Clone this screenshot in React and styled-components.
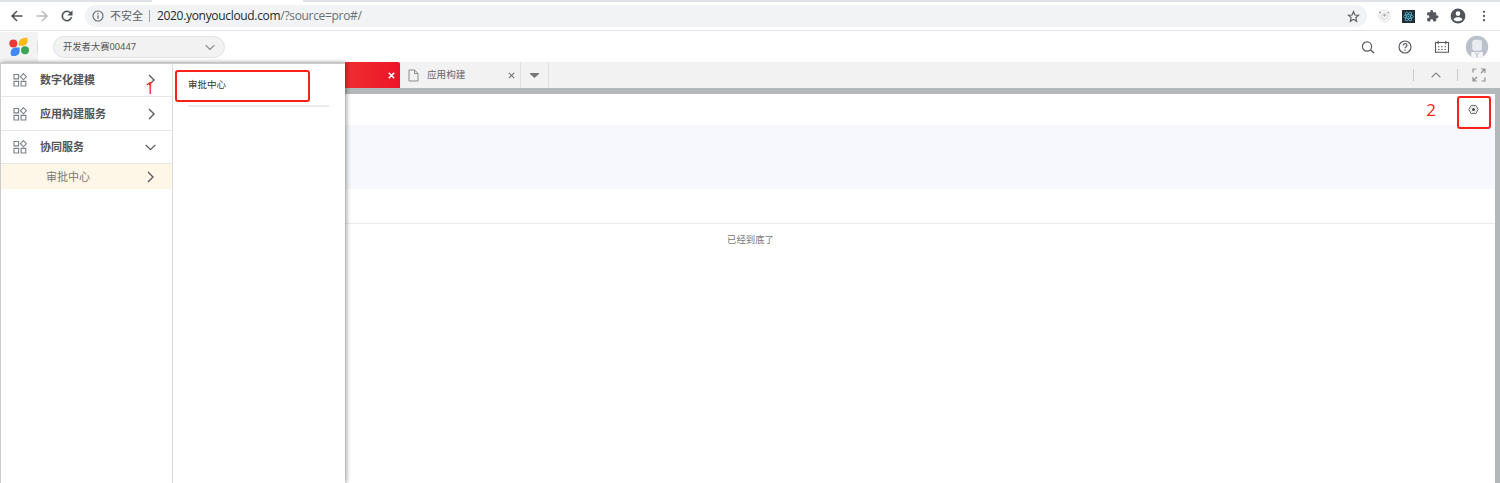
import React from 'react';
import styled, { createGlobalStyle } from 'styled-components';

const GlobalStyle = createGlobalStyle`
  * { box-sizing: border-box; }
  body {
    margin: 0;
    background: #fff;
    overflow: hidden;
    font-family: "Noto Sans", "Noto Sans CJK SC", sans-serif;
    color: #333;
  }
  svg { display: block; flex: none; }
`;

const Page = styled.div`
  position: relative;
  display: flex;
  flex-direction: column;
  height: 483px;
  overflow: hidden;
`;

/* Browser chrome */
const TabStrip = styled.div`
  height: 2px;
  flex: none;
  background: #dee1e6;
  padding-left: 152px;
`;
const ActiveBrowserTab = styled.div`
  width: 151px;
  height: 2px;
  background: #fff;
`;
const Toolbar = styled.div`
  height: 29px;
  flex: none;
  display: flex;
  align-items: center;
  padding: 0 9px 0 9px;
  border-bottom: 1px solid #e1e3e6;
`;
const NavButtons = styled.div`
  display: flex;
  gap: 9px;
  width: 76px;
`;
const AddressBar = styled.div`
  flex: 1;
  height: 22px;
  border-radius: 11px;
  background: #f1f3f4;
  display: flex;
  align-items: center;
  padding: 0 7px 0 7px;
  font-size: 12px;
  line-height: 22px;
  color: #5f6368;
`;
const Warning = styled.span`
  margin-left: 6px;
  width: 33px;
  font-size: 11px;
  white-space: nowrap;
`;
const AddressDivider = styled.span`
  width: 1px;
  height: 12px;
  margin: 0 7px 0 6px;
  background: #9fa3a7;
`;
const Url = styled.span`
  flex: 1;
  color: #6b6f73;
  font-family: "Open Sans", sans-serif;
  font-size: 12px;
  letter-spacing: -0.32px;
  b { font-weight: 400; color: #27292c; }
`;
const Extensions = styled.div`
  display: flex;
  align-items: center;
  gap: 11px;
  margin-left: 11px;
`;

/* Application header */
const Header = styled.header`
  height: 31px;
  flex: none;
  display: flex;
  align-items: center;
  padding: 1px 11px 0 0;
`;
const LogoCell = styled.div`
  width: 38px;
  height: 31px;
  padding: 5px 0 0 8px;
  background: linear-gradient(#ddd, #ddd) right center / 1px 12px no-repeat, #f3f3f3;
`;
const TenantSelect = styled.div`
  width: 172px;
  height: 22px;
  margin-left: 15px;
  padding: 0 9px;
  border: 1px solid #e3e3e3;
  border-radius: 11px;
  background: #f2f2f2;
  display: flex;
  align-items: center;
  justify-content: space-between;
  font-size: 9.3px;
  line-height: 20px;
  color: #555;
`;
const HeaderActions = styled.div`
  margin-left: auto;
  display: flex;
  align-items: center;
`;
const ActionSlot = styled.div`
  width: 37px;
  display: flex;
  justify-content: center;
`;
const AvatarSlot = styled.div`
  margin-left: 5px;
`;

/* Open page tabs */
const TabBar = styled.nav`
  height: 26px;
  flex: none;
  display: flex;
  background: #f2f2f2;
`;
const RedTab = styled.div`
  width: 55px;
  margin-left: 345px;
  display: flex;
  align-items: center;
  justify-content: flex-end;
  padding: 1px 5px 0 0;
  border-radius: 0 2px 0 0;
  background: linear-gradient(90deg, #ef2f30, #ec1428);
`;
const PageTab = styled.div`
  width: 121px;
  display: flex;
  align-items: center;
  padding: 0 5px 0 8px;
  border-right: 1px solid #e0e0e0;
  font-size: 9.6px;
  color: #666;
`;
const TabLabel = styled.span`
  flex: 1;
  margin-left: 8px;
  line-height: 24px;
`;
const TabMenu = styled.div`
  width: 28px;
  display: flex;
  align-items: center;
  justify-content: center;
  border-right: 1px solid #e0e0e0;
`;
const TabTools = styled.div`
  margin-left: auto;
  display: flex;
  align-items: center;
`;
const ToolCell = styled.div`
  width: ${(p) => p.$width}px;
  height: 12px;
  border-left: 1px solid #c9c9c9;
  display: flex;
  align-items: center;
  justify-content: center;
`;

/* Page content */
const Frame = styled.main`
  flex: 1;
  border: solid #b3b8bb;
  border-width: 6px 5px 0 0;
  background: #fff;
`;
const ContentTop = styled.div`
  height: 31px;
  display: flex;
  align-items: flex-start;
  justify-content: flex-end;
  padding: 2px 4px 0 0;
`;
const StepNumber = styled.span`
  font-family: "Open Sans", sans-serif;
  font-size: 17px;
  line-height: 27px;
  color: #fb2418;
`;
const GearMark = styled.div`
  width: 34px;
  height: 33px;
  margin-left: 21px;
  border: 2px solid #fa2117;
  border-radius: 3px;
  display: flex;
  justify-content: center;
  padding: 6px 1px 0 0;
  position: relative;
  z-index: 1;
`;
const Band = styled.div`
  height: 64px;
  background: #f7f8fd;
`;
const FilterRow = styled.div`
  height: 35px;
  border-bottom: 1px solid #ebebeb;
`;
const EndText = styled.p`
  margin: 0;
  padding-top: 7px;
  padding-left: 6px;
  text-align: center;
  font-size: 9.4px;
  line-height: 18px;
  color: #777;
`;

/* Menu that drops over the page */
const MenuPanel = styled.aside`
  position: absolute;
  top: 63px;
  left: 0;
  z-index: 2;
  width: 345px;
  height: 420px;
  display: flex;
  background: #fff;
  border: solid #ccc;
  border-width: 1px 0 0 1px;
  box-shadow: 1px 0 5px rgba(0, 0, 0, 0.45);
`;
const MenuColumn = styled.div`
  width: 172px;
  border-right: 1px solid #ddd;
`;
const MenuRow = styled.div`
  height: ${(p) => p.$height}px;
  display: flex;
  align-items: center;
  padding: 0 ${(p) => (p.$open ? 16 : 17)}px 0 12px;
  border-bottom: 1px solid #e6e6e6;
  font-size: 11px;
  font-weight: 600;
  color: #555;
`;
const MenuLabel = styled.span`
  flex: 1;
  margin-left: 13px;
  line-height: 30px;
`;
const SubRow = styled.div`
  height: 25px;
  display: flex;
  align-items: center;
  justify-content: space-between;
  padding: 0 18px 0 45px;
  background: #fef6e6;
  font-size: 11px;
  line-height: 25px;
  color: #777;
`;
const SubColumn = styled.div`
  flex: 1;
  padding: 6px 0 0 2px;
`;
const Highlighted = styled.div`
  width: 135px;
  height: 32px;
  border: 2px solid #fa2117;
  border-radius: 3px;
  padding-left: 11px;
  font-size: 9.5px;
  line-height: 26px;
  color: #333;
`;
const Rule = styled.div`
  width: 141px;
  height: 2px;
  margin: 3px 0 0 13px;
  background: #ececec;
`;
const StepOverlay = styled(StepNumber)`
  position: absolute;
  top: 10px;
  left: 144px;
`;

const Line = ({ w = 14, h = w, box = '0 0 24 24', color = '#555', sw = 2, children }) => (
  <svg width={w} height={h} viewBox={box} fill="none" stroke={color} strokeWidth={sw}>
    {children}
  </svg>
);

const ChevronRight = () => (
  <Line w={7} h={12} box="0 0 7 12" color="#5a5a5a" sw={1.4}><path d="M1 1l5 5-5 5" /></Line>
);
const ChevronDown = ({ color = '#5a5a5a', w = 11 }) => (
  <Line w={w} h={7} box="0 0 11 7" color={color} sw={1.3}><path d="M.7.9l4.8 4.8L10.3.9" /></Line>
);
const Cross = ({ color, sw = 1.2 }) => (
  <Line w={7} box="0 0 7 7" color={color} sw={sw}><path d="M.8.8l5.4 5.4M6.2.8L.8 6.2" /></Line>
);
const ModuleIcon = () => (
  <Line w={14} box="0 0 14 14" color="#7c808b" sw={1.1}>
    <path d="M1 1.5h4.6v4.4H1zM1 8.4h4.6V13H1zM8.1 8.4h4.7V13H8.1zM10.4.6l3 3.1-3 3.1-3-3.1z" />
  </Line>
);

const BackArrow = ({ color }) => (
  <Line w={16} box="0 0 16 16" color={color} sw={1.5}><path d="M13.5 8H3M8 3L3 8l5 5" /></Line>
);
const ForwardArrow = ({ color }) => (
  <Line w={16} box="0 0 16 16" color={color} sw={1.5}><path d="M2.5 8H13M8 3l5 5-5 5" /></Line>
);
const Reload = () => (
  <svg width="16" height="16" viewBox="0 0 24 24" fill="#4e5257" stroke="#4e5257" strokeWidth=".5">
    <path d="M17.65 6.35A7.96 7.96 0 0 0 12 4a8 8 0 1 0 7.73 10h-2.08A6 6 0 1 1 12 6c1.66 0 3.14.69 4.22 1.78L13 11h7V4z" />
  </svg>
);
const Info = () => (
  <Line w={12} box="0 0 12 12" color="#5f6368" sw={1.1}>
    <circle cx="6" cy="6" r="5" /><path d="M6 5.3v3.5M6 3.1v1.2" strokeWidth="1.2" />
  </Line>
);
const Star = () => (
  <Line w={13} box="0 0 24 24" color="#55595e" sw={2}>
    <path d="M12 2.8l2.7 6.3 6.8.6-5.2 4.5 1.6 6.7-5.9-3.6-5.9 3.6 1.6-6.7-5.2-4.5 6.8-.6z" />
  </Line>
);
const Orbit = () => (
  <svg width="13" height="14" viewBox="0 0 13 14" fill="#999">
    <circle cx="6.5" cy="7" r="5.8" fill="#f7f7f7" stroke="#ddd" strokeWidth=".8" />
    <circle cx="6.5" cy="7.3" r="3" fill="none" stroke="#c4c4c4" strokeWidth=".7" />
    <circle cx="2" cy="3.4" r=".9" /><circle cx="6.5" cy="6.4" r="1.1" /><circle cx="10.3" cy="3.6" r=".8" />
  </svg>
);
const ReactBadge = () => (
  <svg width="13" height="13" viewBox="0 0 13 13" fill="none" stroke="#54bcd8" strokeWidth=".75">
    <path d="M0 0h13v13H0z" fill="#222c35" stroke="none" />
    <ellipse cx="6.5" cy="6.5" rx="5" ry="1.9" />
    <ellipse cx="6.5" cy="6.5" rx="5" ry="1.9" transform="rotate(60 6.5 6.5)" />
    <ellipse cx="6.5" cy="6.5" rx="5" ry="1.9" transform="rotate(120 6.5 6.5)" />
    <circle cx="6.5" cy="6.5" r=".8" fill="#54bcd8" stroke="none" />
  </svg>
);
const Puzzle = () => (
  <svg width="13" height="14" viewBox="0 0 24 24" fill="#55595e">
    <path d="M20.5 11H19V7a2 2 0 0 0-2-2h-4V3.5a2.5 2.5 0 0 0-5 0V5H4a2 2 0 0 0-2 2v3.8h1.5a2.7 2.7 0 0 1 0 5.4H2V20a2 2 0 0 0 2 2h3.8v-1.5a2.7 2.7 0 0 1 5.4 0V22H17a2 2 0 0 0 2-2v-4h1.5a2.5 2.5 0 0 0 0-5z" />
  </svg>
);
const Profile = () => (
  <svg width="16" height="16" viewBox="0 0 16 16">
    <circle cx="8" cy="8" r="7.4" fill="#50545a" />
    <circle cx="8" cy="5.6" r="2.3" fill="#fff" />
    <path d="M3.5 11.2C4.5 9.7 6.2 9.2 8 9.2s3.5.5 4.5 2C11.5 12.5 9.9 13.3 8 13.3s-3.5-.8-4.5-2.1z" fill="#fff" />
  </svg>
);
const Dots = () => (
  <svg width="14" height="14" viewBox="0 0 14 14" fill="#55595e">
    <circle cx="7" cy="2.8" r="1.15" /><circle cx="7" cy="7" r="1.15" /><circle cx="7" cy="11.2" r="1.15" />
  </svg>
);
const Logo = () => (
  <svg width="22" height="20" viewBox="0 0 22 20">
    <circle cx="5.3" cy="6.6" r="4" fill="#ea3a38" />
    <path d="M10.8 8.7V6.2C10.8 2.5 14 .9 19.2.6c1.3 4.6-.5 8.1-4.2 8.1z" fill="#fcb913" />
    <path d="M11.6 10.4v4c0 3.6-3.8 5.1-7.9 4.6-2.2-3-1-8 3.2-8.6z" fill="#4089f6" />
    <circle cx="17" cy="13.2" r="4" fill="#3aa655" />
  </svg>
);
const Search = () => (
  <Line w={14} box="0 0 14 14" color="#5b5b5b" sw={1.2}>
    <circle cx="6" cy="6.5" r="4.6" /><path d="M9.3 9.8l3.7 3.2" strokeWidth="1.5" />
  </Line>
);
const Help = () => (
  <Line w={14} box="0 0 14 14" color="#55565c" sw={1.15}>
    <circle cx="7" cy="7" r="6" />
    <path d="M5.1 5.5c0-2.6 3.9-2.4 3.9-.1 0 1.3-2 1.4-2 2.9M7 9.4v1.3" />
  </Line>
);
const Calendar = () => (
  <Line w={16} h={14} box="0 0 16 14" color="#5b5555" sw={1.1}>
    <path d="M1.5 2.5h13v9.8h-13zM4.2.7v3.5M11.8.7v3.5" />
    <path d="M4 6.7h8.4M4 9.5h8.4" strokeDasharray="1.4 1.9" />
  </Line>
);
const Avatar = () => (
  <svg width="24" height="24" viewBox="0 0 24 24">
    <circle cx="12" cy="12" r="11.2" fill="#bac1cb" />
    <rect x="7.3" y="4.8" width="9.6" height="11" rx="2.5" fill="#e9edf1" />
    <path d="M6.3 17h11.6v4.6c-3.5 2-8.2 2-11.6 0z" fill="#f4f6f8" />
    <path d="M10 17.7l2 2 2-2M12 19.7v2.5" stroke="#a5adb9" fill="none" />
  </svg>
);
const FileIcon = () => (
  <Line w={11} h={13} box="0 0 11 13" color="#8c8c8c" sw={1}>
    <path d="M1 1h5.6L10 4.4V12H1zM6.5 1v3.5H10" />
  </Line>
);
const Expand = () => (
  <Line w={14} box="0 0 14 14" color="#8f8f8f" sw={1.2}>
    <path d="M1 4.5V1h3.5M9 1h4v4M13 1L9 5M1 9v4h4M1 13l4-4M13 9.5V13H9.5" />
  </Line>
);
const Gear = () => (
  <Line w={11} h={11} box="0 0 11 11" color="#666" sw={1}>
    <path d="M3.2 1.4h4.6l2.4 4.1-2.4 4.1H3.200L.8 5.500z" strokeLinejoin="round" />
    <circle cx="5.5" cy="5.5" r="1.5" fill="#444" stroke="none" />
    <circle cx="5.500" cy="5.500" r="2.900" stroke="#aaa" strokeWidth=".5" />
  </Line>
);

const modules = [
  { name: '数字化建模', height: 33 },
  { name: '应用构建服务', height: 34 },
  { name: '协同服务', height: 33, open: true },
];

export default function App() {
  return (
    <Page>
      <GlobalStyle />
      <TabStrip><ActiveBrowserTab /></TabStrip>
      <Toolbar>
        <NavButtons>
          <BackArrow color="#4e5257" />
          <ForwardArrow color="#babcbe" />
          <Reload />
        </NavButtons>
        <AddressBar>
          <Info />
          <Warning>不安全</Warning>
          <AddressDivider />
          <Url><b>2020.yonyoucloud.com</b>/?source=pro#/</Url>
          <Star />
        </AddressBar>
        <Extensions>
          <Orbit /><ReactBadge /><Puzzle /><Profile /><Dots />
        </Extensions>
      </Toolbar>
      <Header>
        <LogoCell><Logo /></LogoCell>
        <TenantSelect>开发者大赛00447<ChevronDown color="#888" w={10} /></TenantSelect>
        <HeaderActions>
          <ActionSlot><Search /></ActionSlot>
          <ActionSlot><Help /></ActionSlot>
          <ActionSlot><Calendar /></ActionSlot>
          <AvatarSlot><Avatar /></AvatarSlot>
        </HeaderActions>
      </Header>
      <TabBar>
        <RedTab><Cross color="#fff" sw={1.6} /></RedTab>
        <PageTab>
          <FileIcon />
          <TabLabel>应用构建</TabLabel>
          <Cross color="#777" />
        </PageTab>
        <TabMenu>
          <svg width="9" height="5" viewBox="0 0 9 5"><path d="M0 0h9v1L4.5 5 0 1z" fill="#777" /></svg>
        </TabMenu>
        <TabTools>
          <ToolCell $width={44}>
            <Line w={10} h={6} box="0 0 10 6" color="#888" sw={1.2}><path d="M.6 5.3L5 1l4.4 4.3" /></Line>
          </ToolCell>
          <ToolCell $width={43}><Expand /></ToolCell>
        </TabTools>
      </TabBar>
      <Frame>
        <ContentTop>
          <StepNumber>2</StepNumber>
          <GearMark><Gear /></GearMark>
        </ContentTop>
        <Band />
        <FilterRow />
        <EndText>已经到底了</EndText>
      </Frame>
      <MenuPanel>
        <MenuColumn>
          {modules.map((m) => (
            <MenuRow key={m.name} $height={m.height} $open={m.open}>
              <ModuleIcon />
              <MenuLabel>{m.name}</MenuLabel>
              {m.open ? <ChevronDown /> : <ChevronRight />}
            </MenuRow>
          ))}
          <SubRow>审批中心<ChevronRight /></SubRow>
        </MenuColumn>
        <SubColumn>
          <Highlighted>审批中心</Highlighted>
          <Rule />
        </SubColumn>
        <StepOverlay>1</StepOverlay>
      </MenuPanel>
    </Page>
  );
}
